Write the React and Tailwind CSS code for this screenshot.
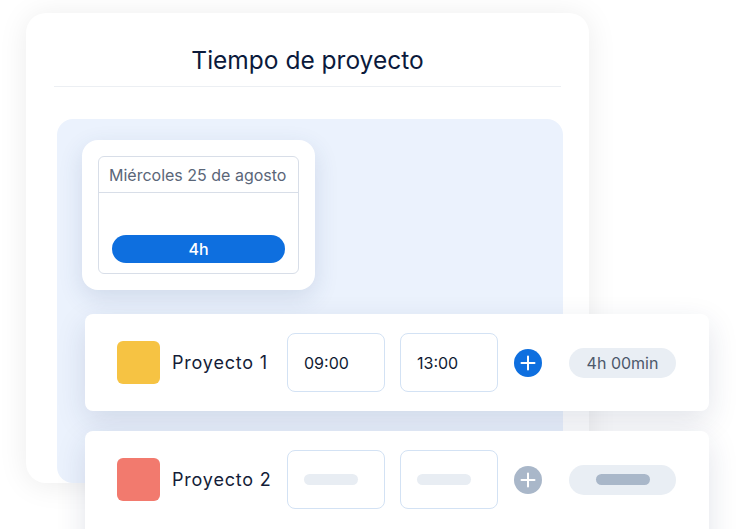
import React from 'react'

const font = { fontFamily: 'Inter, "Noto Sans", sans-serif' }

const PlusCircle = ({ active }) => (
  <div
    className={
      active
        ? 'flex h-[28px] w-[28px] shrink-0 items-center justify-center rounded-full bg-[#0e6fdf]'
        : 'flex h-[28px] w-[28px] shrink-0 items-center justify-center rounded-full bg-[#a9b7c9]'
    }
  >
    <svg width="16" height="16" viewBox="0 0 16 16" fill="none">
      <path d="M8 1.5v13M1.5 8h13" stroke="#fff" strokeWidth="2" strokeLinecap="round" />
    </svg>
  </div>
)

const TimeBox = ({ value }) => (
  <div className="flex h-[59px] w-[98px] shrink-0 items-center rounded-[8px] border border-[#d3e2f4] bg-white pl-[16px]">
    {value ? (
      <span className="text-[16px] leading-none text-[#0f1a33]">{value}</span>
    ) : (
      <span className="h-[11px] w-[54px] rounded-full bg-[#e8edf3]" />
    )}
  </div>
)

const ProjectRow = ({ color, name, start, end, total, active, className }) => (
  <div
    className={
      'absolute left-[85px] w-[624px] rounded-[8px] bg-white shadow-[0_10px_30px_rgba(30,50,90,0.13)] ' + className
    }
  >
    <div className="flex h-[97px] items-center pl-[32px]">
      <div className="h-[43px] w-[43px] shrink-0 rounded-[6px]" style={{ backgroundColor: color }} />
      <span className="ml-[12px] w-[115px] shrink-0 text-[18px] leading-none tracking-[0.045em] text-[#141d38]">
        {name}
      </span>
      <TimeBox value={start} />
      <div className="w-[15px] shrink-0" />
      <TimeBox value={end} />
      <div className="ml-[16px]">
        <PlusCircle active={active} />
      </div>
      <div className="ml-[27px] flex h-[30px] w-[107px] shrink-0 items-center justify-center rounded-full bg-[#e9eef4]">
        {total ? (
          <span className="text-[16px] leading-none text-[#4c586b]">{total}</span>
        ) : (
          <span className="h-[11px] w-[54px] rounded-full bg-[#a9b7c9]" />
        )}
      </div>
    </div>
  </div>
)

export default function App() {
  return (
    <div className="relative h-[529px] w-[736px] overflow-hidden bg-white pl-[26px] pt-[13px]" style={font}>
      <div className="flex h-[470px] w-[563px] flex-col overflow-hidden rounded-[20px] bg-white shadow-[0_2px_30px_rgba(0,0,0,0.08)]">
        <div className="pt-[35px] text-center text-[24.5px] leading-none text-[#0b1a3c]">Tiempo de proyecto</div>
        <div className="mx-[28px] mt-[13px] border-t border-[#eceff3]" />
        <div className="ml-[31px] mt-[32px] w-[506px] flex-1 rounded-t-[16px] rounded-bl-[16px] bg-[#ebf2fd] pl-[25px] pt-[21px]">
          <div className="w-[233px] rounded-[16px] bg-white p-[16px] shadow-[0_8px_24px_rgba(40,70,120,0.14)]">
            <div className="rounded-[6px] border border-[#d8dee8]">
              <div className="flex h-[36px] items-center border-b border-[#d8dee8] pl-[10px] pt-[1px] text-[16px] leading-none text-[#5a6678]">
                Miércoles 25 de agosto
              </div>
              <div className="px-[13px] pb-[10px] pt-[42px]">
                <div className="flex h-[28px] items-center justify-center rounded-full bg-[#0e6fdf] text-[16px] font-medium leading-none text-white">
                  4h
                </div>
              </div>
            </div>
          </div>
        </div>
      </div>

      <ProjectRow
        className="top-[314px]"
        color="#f6c343"
        name="Proyecto 1"
        start="09:00"
        end="13:00"
        total="4h 00min"
        active
      />
      <ProjectRow className="top-[431px] h-[130px]" color="#f27a6e" name="Proyecto 2" />
    </div>
  )
}
